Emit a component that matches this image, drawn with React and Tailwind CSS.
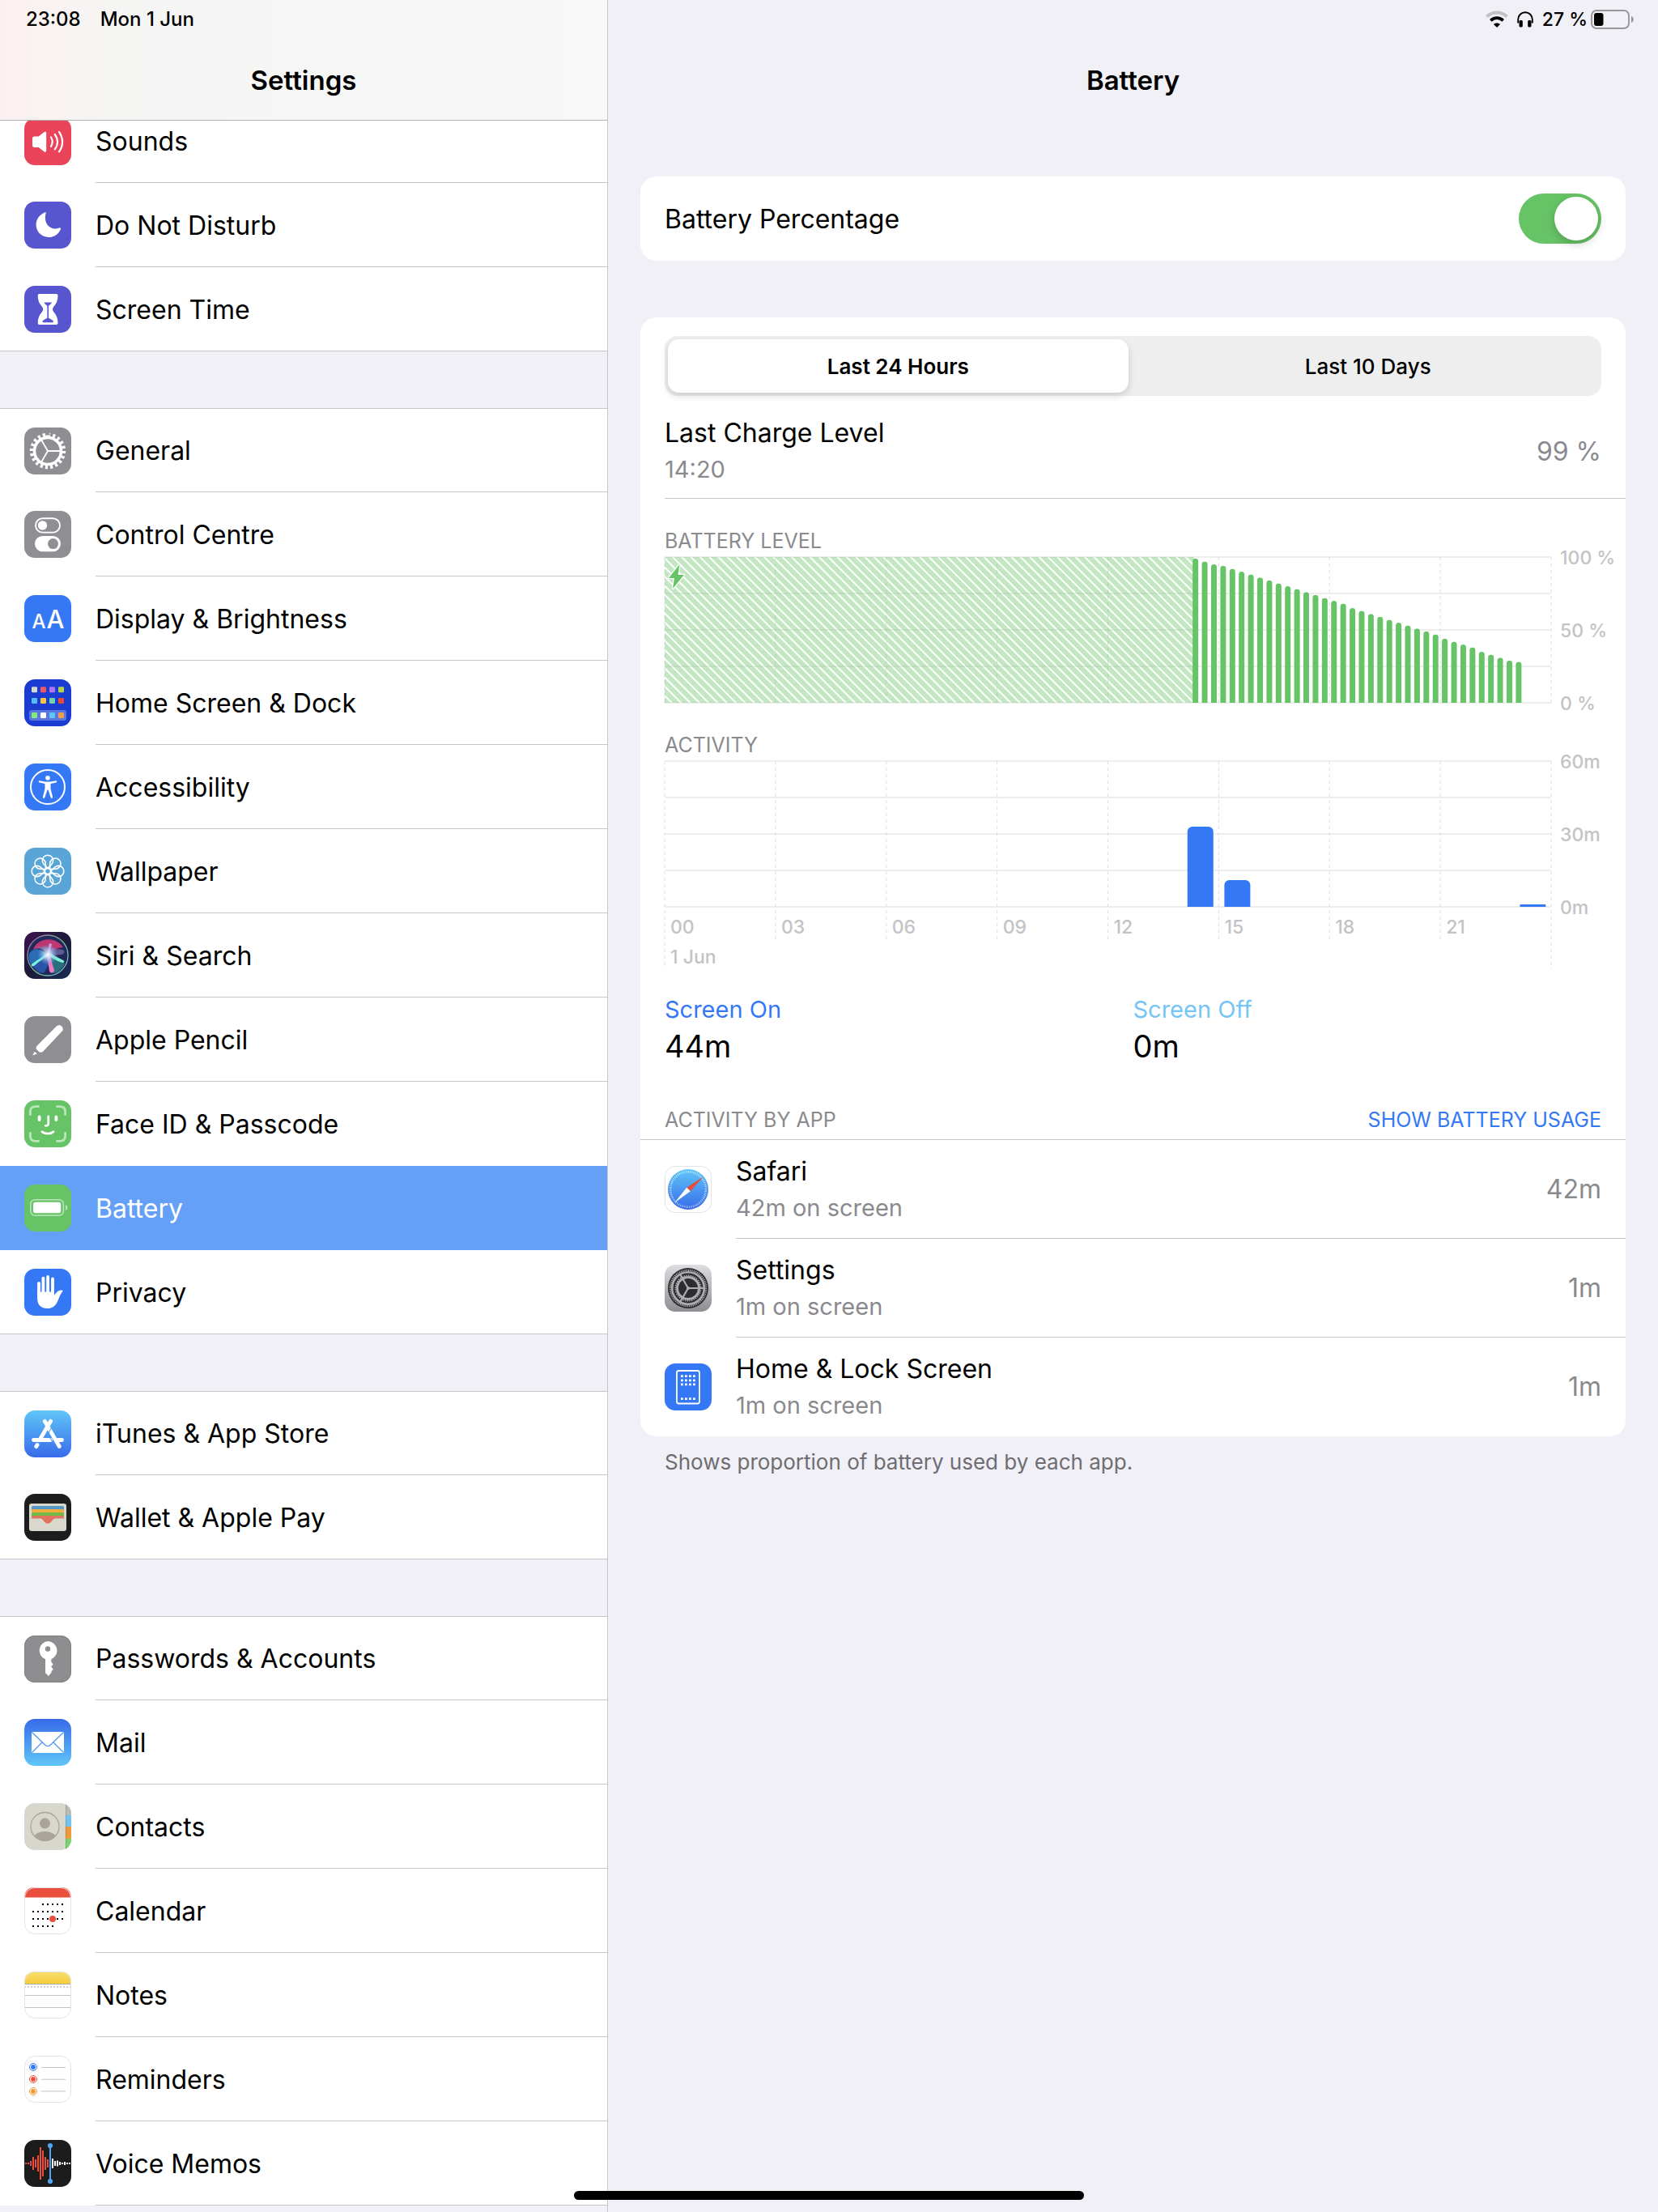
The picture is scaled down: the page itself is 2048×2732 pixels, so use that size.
import { useState } from "react";

const Tile = ({ fill, border, children }) => (
  <svg viewBox="0 0 58 58" className="size-[58px] shrink-0" aria-hidden="true">
    <rect width="58" height="58" rx="13" fill={fill} />
    {children}
    {border && (
      <rect x="0.5" y="0.5" width="57" height="57" rx="12.5" fill="none" stroke="#e3e3e5" />
    )}
  </svg>
);

const SoundsIcon = () => (
  <Tile fill="#ea445a">
    <path
      d="M10 25.2q0-2.7 2.7-2.7h5l6.7-5.3q2.8-1.8 2.8 1.6v20.8q0 3.4-2.8 1.6l-6.7-5.3h-5q-2.7 0-2.7-2.7z"
      fill="#fff"
    />
    <g fill="none" stroke="#fff" strokeWidth="2.2" strokeLinecap="round">
      <path d="M33 23.5c2.2 3.6 2.2 7.8 0 11.4" />
      <path d="M37.8 20c4.2 5.8 4.2 12.6 0 18.4" />
      <path d="M43 17c5.4 7.6 5.4 16.8 0 24.4" />
    </g>
  </Tile>
);

const MoonIcon = () => (
  <Tile fill="#5856ce">
    <path
      d="M25.6 13.2C18.8 16 14.6 22 14.6 28.6c0 8.6 6.8 15.4 15.6 15.4 6.7 0 12.6-4 14.9-10.6.2-.9-.5-1.2-1.5-.8-10.8 3.6-20.4-5-17-18.2.2-1-.2-1.5-1-1.2z"
      fill="#fff"
    />
  </Tile>
);

const HourglassIcon = () => (
  <Tile fill="#5856ce">
    <path
      d="M18.5 10h21.2q1.8 0 1.8 2c0 6-1.8 10-5 13.5q-3 3.5 0 7c3.2 3.5 5 8 5 13.5q0 2-1.8 2H18.5q-1.8 0-1.8-2c0-5.5 1.8-10 5-13.5q3-3.5 0-7c-3.2-3.5-5-7.5-5-13.5q0-2 1.8-2z"
      fill="#fff"
    />
    <path
      d="M24.4 20.5h9.7c-1 1.8-2.3 3-4.1 4.3v15c1.6 1.2 4.6 2 5.8 3.6q.7 1.8-.9 1.8H23.5q-1.6 0-.9-1.8c1.2-1.6 4.2-2.4 5.8-3.6v-15c-1.8-1.3-3-2.5-4-4.3z"
      fill="#5856ce"
    />
  </Tile>
);

const GeneralIcon = () => (
  <Tile fill="#8e8e93">
    <g fill="none" stroke="#fff">
      <circle cx="29" cy="29" r="19.5" strokeWidth="5.4" pathLength="40" strokeDasharray="1 1" />
      <circle cx="29" cy="29" r="16.5" strokeWidth="3.6" />
      <path d="M29 29h16M29 29l-8-13.9M29 29l-8 13.9" strokeWidth="1.9" />
    </g>
  </Tile>
);

const ControlCentreIcon = () => (
  <Tile fill="#8e8e93">
    <rect x="14" y="9.2" width="30" height="17.4" rx="8.7" fill="none" stroke="#fff" strokeWidth="1.9" />
    <circle cx="22.5" cy="17.9" r="5.7" fill="#fff" />
    <rect x="13" y="31" width="32" height="19.3" rx="9.6" fill="#fff" />
    <circle cx="35.5" cy="40.6" r="6.5" fill="#8e8e93" />
  </Tile>
);

const DisplayIcon = () => (
  <Tile fill="#3478f6">
    <g fill="#fff" fontFamily="Inter, sans-serif" fontWeight="500" textAnchor="middle">
      <text x="18" y="41" fontSize="24">A</text>
      <text x="38.5" y="41" fontSize="31">A</text>
    </g>
  </Tile>
);

const dockColors = [
  ["#d9d9d3", "#eb5a63", "#b073f2", "#b7d34c"],
  ["#55bdf8", "#f7c443", "#6fd5a8", "#ea4b37"],
  ["#84ea7d", "#ffffff", "#5cc9fa", "#f19e4c"],
];
const dockRows = [9.3, 23, 41];

const HomeDockIcon = () => (
  <Tile fill="#1b3cd1">
    <rect x="6" y="38" width="46" height="13" rx="3" fill="#5c76df" />
    {dockColors.map((row, r) =>
      row.map((color, c) => (
        <rect key={color} x={9 + c * 11} y={dockRows[r]} width="7" height="7" rx="1.2" fill={color} />
      ))
    )}
  </Tile>
);

const AccessibilityIcon = () => (
  <Tile fill="#3478f6">
    <circle cx="29" cy="29" r="21" fill="none" stroke="#fff" strokeWidth="2" />
    <circle cx="29" cy="17.7" r="2.8" fill="#fff" />
    <path
      d="M19 21.3l7 1.3h6l7-1.3c1.5-.2 1.7 1.8.3 2.1l-6.8 1.5v6l2.6 10.6c.3 1.5-1.8 2-2.4.6L29.5 32.5h-1l-3.2 9.6c-.6 1.4-2.7.9-2.4-.6l2.6-10.6v-6l-6.800-1.5c-1.4-.3-1.2-2.3.3-2.1z"
      fill="#fff"
    />
  </Tile>
);

const WallpaperIcon = () => (
  <Tile fill="#59a5d8">
    <g fill="none" stroke="#fff" strokeWidth="1.6" strokeLinejoin="round">
      {[0, 45, 90, 135, 180, 225, 270, 315].map((angle) => (
        <path
          key={angle}
          d="M29 25.4l-4.9-5.2A6.6 6.6 0 1 1 33.9 20.2z"
          transform={`rotate(${angle} 29 29)`}
        />
      ))}
      <circle cx="29" cy="29" r="3.6" />
    </g>
  </Tile>
);

const SiriIcon = () => (
  <Tile fill="url(#siriBg)">
    <defs>
      <linearGradient id="siriBg" x1="0" y1="0" x2="1" y2="1">
        <stop offset="0" stopColor="#41104f" />
        <stop offset="0.5" stopColor="#1b1b3a" />
        <stop offset="1" stopColor="#1b2c55" />
      </linearGradient>
      <radialGradient id="siriGlow">
        <stop offset="0" stopColor="#fff" />
        <stop offset="0.35" stopColor="#c9e4fa" stopOpacity="0.75" />
        <stop offset="1" stopColor="#6aa5e8" stopOpacity="0" />
      </radialGradient>
      <linearGradient id="siriRing" x1="0" y1="0" x2="1" y2="1">
        <stop offset="0" stopColor="#9a63ad" />
        <stop offset="0.5" stopColor="#78b88f" />
        <stop offset="1" stopColor="#6cb6d8" />
      </linearGradient>
    </defs>
    <circle cx="29" cy="29" r="25" fill="#23285a" stroke="url(#siriRing)" strokeWidth="1.3" />
    <path d="M11 22C15 9 36 3 48 19c-9 1-13 4-17 8-5-6-11-8-20-5z" fill="#d93a78" opacity="0.85" />
    <path d="M14 19c9-3 20 2 33 3 4 1 3 6-2 6l-14 1C27 23 21 20 14 19z" fill="#7a6fae" opacity="0.7" />
    <path d="M6 27c3-6 11-8 17-3l6 4L10 42C6 38 5 32 6 27z" fill="#2c79c4" opacity="0.85" />
    <path d="M10 41c6-7 12-12 20-13l2 9-8 14c-7-1-12-5-14-10z" fill="#2c5fb8" opacity="0.8" />
    <path d="M30 27l20 12c-4 8-10 12-15 12z" fill="#2a7c86" opacity="0.85" />
    <path d="M30 26c-7 4-15 9-21 14-1 2 1 3 3 2 6-5 12-10 19-12zM28 27c6 5 12 9 19 11 3 0 3-2 1-3-6-3-11-6-17-9z" fill="#7df0da" />
    <path d="M31 14l3 1-3 13h-3z" fill="#d7b6ea" opacity="0.8" />
    <path d="M27 28l5-1c1 8 3 14 5 20 0 4-5 5-6 1-1-7-2-13-4-20z" fill="#ee79c5" />
    <circle cx="29" cy="28" r="13" fill="url(#siriGlow)" />
  </Tile>
);

const PencilIcon = () => (
  <Tile fill="#8e8e93">
    <path
      d="M40 12.3c3.8-2.8 9.3.8 7.3 5.6L23.6 43.2c-1.4 1.5-3.2 1.8-5 1.2l-3.6-3.3c-.8-1.6-.4-3 .8-4.5zM12.8 43.8l3 2.7-5.7 2z"
      fill="#fff"
    />
  </Tile>
);

const FaceIdIcon = () => (
  <Tile fill="#67c466">
    <g fill="none" strokeLinecap="round" strokeWidth="2.8">
      <path
        d="M7.4 17.5v-3.3q0-6.6 6.6-6.6h3.5M40.5 7.6H44q6.6 0 6.6 6.6v3.3M50.6 40.5v3.3q0 6.6-6.6 6.6h-3.5M17.5 50.4H14q-6.6 0-6.6-6.6v-3.3"
        stroke="#bce5bb"
      />
      <g stroke="#fff">
        <path d="M18.6 20.5v3.5M39.4 20.5v3.5" strokeWidth="3.8" />
        <path d="M29.8 20v8.5q0 3-3.5 2.9" />
        <path d="M22 38.8c4 3.2 10 3.2 14 0" />
      </g>
    </g>
  </Tile>
);

const BatteryIcon = () => (
  <Tile fill="#67c466">
    <rect x="7.8" y="18.7" width="40.6" height="19.6" rx="5.5" fill="none" stroke="#bce5bb" strokeWidth="1.5" />
    <rect x="11" y="21.7" width="34.2" height="13.6" rx="2.8" fill="#fff" />
    <path d="M51 25.3c3.2.6 3.2 5.8 0 6.6z" fill="#bce5bb" />
  </Tile>
);

const HandIcon = () => (
  <Tile fill="#3478f6">
    <g fill="none" stroke="#fff" strokeWidth="3.8" strokeLinecap="round">
      <path d="M18 18v16M23.4 11.6v20M29.1 10v20M35 12.3v20" />
    </g>
    <path
      d="M16.1 28.5h20.8v4.2l3.2-3.6c1.8-2.2 4-3 6.6-2.5 1 .2 1.1.9.5 1.6-2.6 2.8-3.7 6.2-5.3 10.2C39.3 45 35.5 49 28.6 49c-8.2 0-12.5-4.7-12.5-12.5z"
      fill="#fff"
    />
  </Tile>
);

const AppStoreIcon = () => (
  <Tile fill="url(#storeBg)">
    <defs>
      <linearGradient id="storeBg" x1="0" y1="0" x2="0" y2="1">
        <stop offset="0" stopColor="#5fc6f8" />
        <stop offset="1" stopColor="#386be9" />
      </linearGradient>
    </defs>
    <g fill="none" stroke="#fff" strokeWidth="4.8" strokeLinecap="round">
      <path d="M32.6 13.3L19.5 35.5M16 42.6l-1.3 2" />
      <path d="M25.3 13.3L43.3 44.5" />
      <path d="M11.5 36.5h21M41 36.5h5.5" />
    </g>
    <path d="M33.5 21.5l-4.3 7.6 6.5 11.5" fill="none" stroke="#4b92f0" />
  </Tile>
);

const WalletIcon = () => (
  <Tile fill="#1d1d1d">
    <rect x="6" y="12" width="46" height="34" rx="3" fill="#dad8cd" />
    <path d="M9 20v-3q0-2 2-2h36q2 0 2 2v3z" fill="#5398c6" />
    <path d="M9 24v-3q0-2 2-2h36q2 0 2 2v3z" fill="#f2ae3d" />
    <path d="M9 28v-3q0-2 2-2h36q2 0 2 2v3z" fill="#6fbb46" />
    <path d="M9 31v-2q0-2 2-2h36q2 0 2 2v2H37c-2.5 0-3.5 5.7-8 5.7S23.5 31 21 31z" fill="#e2725f" />
    <path d="M6 30.5h15M37 30.5h15" stroke="#c3c1b5" strokeWidth="0.8" />
  </Tile>
);

const KeyIcon = () => (
  <Tile fill="#8e8e91">
    <rect x="0.5" y="0.5" width="57" height="57" rx="12.5" fill="none" stroke="#808083" />
    <path
      d="M29 7a11.6 11.6 0 0 1 4.3 22.3v3.4l2.5 2.7-2.3 2.3 0 1 2.3 3.1-2.3 2.4v1.5L30 50l-4-3.8V29.3A11.6 11.6 0 0 1 29 7z"
      fill="#fff"
    />
    <circle cx="29" cy="16.5" r="3.2" fill="#8e8e91" />
  </Tile>
);

const MailIcon = () => (
  <Tile fill="url(#mailBg)">
    <defs>
      <linearGradient id="mailBg" x1="0" y1="0" x2="0" y2="1">
        <stop offset="0" stopColor="#386be9" />
        <stop offset="1" stopColor="#5fc6f8" />
      </linearGradient>
    </defs>
    <rect x="9" y="16" width="40" height="26" rx="0.8" fill="#fff" />
    <g fill="none" stroke="#4b93f0" strokeWidth="1.2">
      <path d="M9.5 16.5l15.5 15q4 4.5 8 0l15.5-15" />
      <path d="M9.5 41.5l12.5-12.5M48.5 41.5L36 29" />
    </g>
  </Tile>
);

const ContactsIcon = () => (
  <Tile fill="#d7d7ce">
    <clipPath id="contactsClip">
      <rect width="58" height="58" rx="13" />
    </clipPath>
    <clipPath id="contactsFace">
      <circle cx="25.5" cy="29" r="17.5" />
    </clipPath>
    <g clipPath="url(#contactsClip)">
      <rect x="51" width="7" height="15" fill="#bcbcb3" />
      <rect x="51" y="15" width="7" height="14" fill="#74c2f3" />
      <rect x="51" y="29" width="7" height="15" fill="#f1983a" />
      <rect x="51" y="44" width="7" height="14" fill="#78d46f" />
      <rect x="51" width="1" height="58" fill="#000" opacity="0.15" />
    </g>
    <circle cx="25.5" cy="29" r="17.5" fill="none" stroke="#a9a39c" strokeWidth="1.3" />
    <g fill="#a9a39c" clipPath="url(#contactsFace)">
      <circle cx="25.5" cy="25" r="6.5" />
      <ellipse cx="25.5" cy="45" rx="15" ry="10" />
    </g>
  </Tile>
);

const calendarRows = [
  [2, 6],
  [0, 6],
  [0, 6],
  [0, 4],
];

const CalendarIcon = () => (
  <Tile fill="#fff" border>
    <path d="M0 12.5C.3 4.5 5 0 13 0h32c8 0 12.7 4.5 13 12.5z" fill="#ea4f3d" />
    {calendarRows.map(([from, to], r) =>
      Array.from({ length: to - from + 1 }, (_, i) => (
        <rect key={`${r}-${i}`} x={10 + (from + i) * 6} y={20 + r * 9} width="2" height="2" />
      ))
    )}
    <circle cx="35" cy="39" r="4" fill="#ea4f3d" />
  </Tile>
);

const NotesIcon = () => (
  <Tile fill="#fff" border>
    <defs>
      <linearGradient id="notesTop" x1="0" y1="0" x2="0" y2="1">
        <stop offset="0" stopColor="#f9de70" />
        <stop offset="1" stopColor="#f5cc3c" />
      </linearGradient>
    </defs>
    <path d="M0 15v-2C0 5 5 0 13 0h32c8 0 13 5 13 13v2z" fill="url(#notesTop)" />
    <path d="M0 15.5h58" stroke="#a9a9a4" strokeWidth="1.2" />
    <path d="M0 19h58" stroke="#cfcfcf" strokeWidth="2" strokeDasharray="2 2" />
    <path d="M0 29.5h58M0 44.5h58" stroke="#c4c4c6" />
  </Tile>
);

const RemindersIcon = () => (
  <Tile fill="#fff" border>
    {["#3478f6", "#ea4f3d", "#f19a37"].map((color, i) => (
      <g key={color} stroke={color}>
        <circle cx="11" cy={14 + i * 15} r="4.5" fill="none" />
        <circle cx="11" cy={14 + i * 15} r="2.9" fill={color} stroke="none" />
        <path d={`M21 ${14.5 + i * 14.7}h30`} stroke="#c4c4c6" />
      </g>
    ))}
  </Tile>
);

const redBars = [2, 2, 6, 16, 10, 20, 40, 32, 16, 10];
const whiteBars = [12, 6, 7, 4, 2, 4, 2, 2];

const VoiceMemosIcon = () => (
  <Tile fill="#1c1c1c">
    {redBars.map((h, i) => (
      <rect key={i} x={1 + i * 3} y={29 - h / 2} width="2" height={h} fill="#ea4f3d" />
    ))}
    {whiteBars.map((h, i) => (
      <rect key={i} x={34 + i * 3} y={29 - h / 2} width="2" height={h} fill="#fff" />
    ))}
    <path d="M32 7v44" stroke="#4fa6f2" strokeWidth="2" />
    <circle cx="32" cy="7" r="3.1" fill="#4fa6f2" />
    <circle cx="32" cy="51" r="3.1" fill="#4fa6f2" />
  </Tile>
);

const SafariIcon = () => (
  <Tile fill="#fff" border>
    <circle cx="29" cy="29" r="25" fill="url(#storeBg)" />
    <circle
      cx="29"
      cy="29"
      r="21.8"
      fill="none"
      stroke="#fff"
      strokeOpacity="0.75"
      strokeWidth="2.6"
      pathLength="120"
      strokeDasharray="0.7 1.3"
    />
    <path d="M47.5 13.5L31.8 31.2l-4.6-4.4z" fill="#ea4b3a" />
    <path d="M12.2 45.500l19.600-14.300-4.600-4.400z" fill="#fff" />
  </Tile>
);

const SettingsIcon = () => (
  <Tile fill="url(#gearBg)">
    <defs>
      <linearGradient id="gearBg" x1="0" y1="0" x2="0" y2="1">
        <stop offset="0" stopColor="#dedee2" />
        <stop offset="1" stopColor="#8d8d92" />
      </linearGradient>
    </defs>
    <circle cx="29" cy="29" r="25" fill="#2d2d2f" />
    <g fill="none" stroke="#adadb0">
      <circle cx="29" cy="29" r="22.2" strokeWidth="2.2" pathLength="120" strokeDasharray="1 1" />
      <circle cx="29" cy="29" r="19.8" strokeWidth="2.6" />
      <circle cx="29" cy="29" r="13.5" strokeWidth="3" />
      <circle cx="29" cy="29" r="15.6" strokeWidth="1.8" pathLength="72" strokeDasharray="1 1" />
      <path d="M29 29h20M29 29L19 11.7M29 29L19 46.3" strokeWidth="2.2" />
    </g>
    <circle cx="29" cy="29" r="2" fill="#adadb0" />
  </Tile>
);

const HomeLockIcon = () => (
  <Tile fill="#3478f6">
    <rect x="15" y="9" width="28" height="40.5" rx="2.5" fill="none" stroke="#fff" strokeWidth="1.8" />
    {[14.2, 19.4, 24.4, 42.2].map((y) =>
      [20, 25, 30, 35].map((x) => (
        <rect key={`${x}-${y}`} x={x} y={y} width="2.8" height="2.8" rx="0.5" fill="#fff" />
      ))
    )}
  </Tile>
);

const groups = [
  [
    { name: "Sounds", icon: SoundsIcon },
    { name: "Do Not Disturb", icon: MoonIcon },
    { name: "Screen Time", icon: HourglassIcon },
  ],
  [
    { name: "General", icon: GeneralIcon },
    { name: "Control Centre", icon: ControlCentreIcon },
    { name: "Display & Brightness", icon: DisplayIcon },
    { name: "Home Screen & Dock", icon: HomeDockIcon },
    { name: "Accessibility", icon: AccessibilityIcon },
    { name: "Wallpaper", icon: WallpaperIcon },
    { name: "Siri & Search", icon: SiriIcon },
    { name: "Apple Pencil", icon: PencilIcon },
    { name: "Face ID & Passcode", icon: FaceIdIcon },
    { name: "Battery", icon: BatteryIcon },
    { name: "Privacy", icon: HandIcon },
  ],
  [
    { name: "iTunes & App Store", icon: AppStoreIcon },
    { name: "Wallet & Apple Pay", icon: WalletIcon },
  ],
  [
    { name: "Passwords & Accounts", icon: KeyIcon },
    { name: "Mail", icon: MailIcon },
    { name: "Contacts", icon: ContactsIcon },
    { name: "Calendar", icon: CalendarIcon },
    { name: "Notes", icon: NotesIcon },
    { name: "Reminders", icon: RemindersIcon },
    { name: "Voice Memos", icon: VoiceMemosIcon },
  ],
];

const apps = [
  { name: "Safari", detail: "42m on screen", time: "42m", icon: SafariIcon },
  { name: "Settings", detail: "1m on screen", time: "1m", icon: SettingsIcon },
  { name: "Home & Lock Screen", detail: "1m on screen", time: "1m", icon: HomeLockIcon },
];

// battery percentage for each quarter of an hour, starting at 14:15
const levels = [
  99, 97, 95, 94, 92, 90, 88, 86, 84, 82, 80, 78, 76, 74, 72, 70, 68, 65, 63, 61,
  59, 57, 55, 53, 51, 49, 47, 44, 42, 40, 38, 35, 33, 31, 29, 28,
];
const activity = [
  { hour: 14, minutes: 33 },
  { hour: 15, minutes: 11 },
  { hour: 23, minutes: 1 },
];
const hours = ["00", "03", "06", "09", "12", "15", "18", "21"];
const percent = (value) => `${value * 100}%`;

const Sidebar = () => {
  const [selected, setSelected] = useState("Battery");
  return (
    <aside className="flex w-[751px] shrink-0 flex-col border-r border-[#c8c8cc]">
      <header className="relative z-10 h-[149px] shrink-0 border-b border-[#b2b2b4] bg-linear-to-r from-[#fcf1f0] via-[#f5f5f4] via-18% to-[#f8f8f8]">
        <div className="flex h-12 items-center gap-6 pl-8 text-[24px] font-medium">
          <span>23:08</span>
          <span>Mon 1 Jun</span>
        </div>
        <h1 className="text-center text-[33px] leading-[102px] font-semibold">Settings</h1>
      </header>
      {/* list is scrolled a little way under the header */}
      <nav className="-mt-[27px] flex flex-col gap-[70px]">
        {groups.map((items, g) => (
          <ul key={g} className="bg-white">
            {items.map(({ name, icon: Icon }, i) => {
              const active = name === selected;
              const closesGroup = i === items.length - 1 && g < groups.length - 1;
              return (
                <li key={name} className={i === 0 ? "border-t border-[#c6c6c8]" : ""}>
                  <a
                    href="#"
                    onClick={() => setSelected(name)}
                    className={`flex items-center gap-[30px] pl-[30px] ${i === 0 ? "h-[103px]" : "h-[104px]"} ${
                      active ? "bg-[#64a0f7] text-white" : ""
                    } ${closesGroup ? "border-b border-[#c6c6c8]" : ""}`}
                  >
                    <Icon />
                    <span
                      className={`flex h-full flex-1 items-center pt-0.5 ${
                        active || closesGroup || items[i + 1]?.name === selected
                          ? ""
                          : "border-b border-[#c6c6c8]"
                      }`}
                    >
                      {name}
                    </span>
                  </a>
                </li>
              );
            })}
          </ul>
        ))}
      </nav>
    </aside>
  );
};

const BatteryLevelChart = () => (
  <svg className="h-[180px] w-full overflow-visible" role="img" aria-label="Battery level">
    <defs>
      <pattern id="hatch" width="8" height="8" patternUnits="userSpaceOnUse" patternTransform="rotate(-45)">
        <rect width="6" height="8" fill="#67c466" fillOpacity="0.4" />
      </pattern>
    </defs>
    {[0, 1, 2, 3, 4].map((i) => (
      <line key={i} x1="0" x2="100%" y1={i * 45} y2={i * 45} stroke="#eeeeef" strokeWidth="2" />
    ))}
    {[0, 1, 2, 3, 4, 5, 6, 7, 8].map((i) => (
      <line key={i} x1={percent(i / 8)} x2={percent(i / 8)} y1="0" y2="180" stroke="#dedee0" strokeDasharray="4 4" />
    ))}
    <rect width="59.7%" height="180" fill="url(#hatch)" />
    {levels.map((level, i) => (
      <svg key={i} x={percent((57 + i) / 96)} y={180 - level * 1.8} width="12" height={level * 1.8}>
        <path d="M2 200V3.5a3.5 3.5 0 0 1 7 0V200z" fill="#67c466" />
      </svg>
    ))}
    <path
      d="M18.5 9L5 26h7l-2 13L24 22h-7.5z"
      fill="#67c466"
      stroke="#fff"
      strokeWidth="2.5"
      strokeLinejoin="round"
      paintOrder="stroke"
    />
    <g fill="#c3c3c5" fontSize="23" fontWeight="500">
      <text x="100%" y="9" dx="11">100 %</text>
      <text x="100%" y="99" dx="11">50 %</text>
      <text x="100%" y="189" dx="11">0 %</text>
    </g>
  </svg>
);

const ActivityChart = () => (
  <svg className="h-[257px] w-full overflow-visible" role="img" aria-label="Activity">
    {[0, 1, 2, 3, 4].map((i) => (
      <line key={i} x1="0" x2="100%" y1={i * 45} y2={i * 45} stroke="#eeeeef" strokeWidth="2" />
    ))}
    {[0, 1, 2, 3, 4, 5, 6, 7, 8].map((i) => (
      <line
        key={i}
        x1={percent(i / 8)}
        x2={percent(i / 8)}
        y1="0"
        y2={i % 8 === 0 ? 257 : 224}
        stroke="#dedee0"
        strokeDasharray="4 4"
      />
    ))}
    {activity.map(({ hour, minutes }) => (
      <svg key={hour} x={percent(hour / 24)} y={180 - minutes * 3} width="42" height={minutes * 3}>
        <rect x="7" width="32" height={minutes * 3 + 10} rx={minutes > 3 ? 6 : 1} fill="#3478f6" />
      </svg>
    ))}
    <g fill="#c3c3c5" fontSize="23" fontWeight="500">
      <text x="100%" y="9" dx="11">60m</text>
      <text x="100%" y="99" dx="11">30m</text>
      <text x="100%" y="189" dx="11">0m</text>
      {hours.map((hour, i) => (
        <text key={hour} x={percent(i / 8)} y="213" dx="7">{hour}</text>
      ))}
      <text x="7" y="250">1 Jun</text>
    </g>
  </svg>
);

const StatusIcons = () => (
  <div className="flex h-12 items-center justify-end pr-[29px]">
    <svg viewBox="0 0 28 22" className="mr-[11px] h-[22px] w-7" aria-label="Wi-Fi">
      <path d="M1.5 7.5C8.5.8 19.5.8 26.5 7.5" fill="none" stroke="#c0c0c5" strokeWidth="4" />
      <path d="M6.3 12.3c4.5-4.2 10.9-4.2 15.4 0" fill="none" stroke="#000" strokeWidth="3.8" />
      <path d="M14 21l-4-4c2.2-2 5.8-2 8 0z" />
    </svg>
    <svg viewBox="0 0 20 20" className="mr-[11px] size-5" aria-label="Headphones">
      <path d="M1.2 14.5V10a8.8 8.8 0 0 1 17.6 0v4.5" fill="none" stroke="#000" strokeWidth="1.9" />
      <rect x="2.5" y="11" width="4.3" height="8.5" rx="1.5" />
      <rect x="13.2" y="11" width="4.3" height="8.5" rx="1.5" />
    </svg>
    <span className="text-[23px] font-medium">27 %</span>
    <svg viewBox="0 0 54 24" className="ml-1 h-6 w-[54px]" aria-label="Battery at 27 percent">
      <rect x="1" y="1" width="46" height="22" rx="6" fill="none" stroke="#95959a" strokeWidth="1.9" />
      <rect x="4" y="4" width="11.5" height="16" rx="3" />
      <path d="M50 8c3.6 1 3.6 7 0 8z" fill="#95959a" />
    </svg>
  </div>
);

const BatteryPanel = () => {
  const [showPercentage, setShowPercentage] = useState(true);
  const [range, setRange] = useState("Last 24 Hours");
  return (
    <main className="flex min-w-0 flex-1 flex-col">
      <header className="h-[148px]">
        <StatusIcons />
        <h2 className="text-center text-[33px] leading-[102px] font-semibold">Battery</h2>
      </header>

      <div className="mt-[70px] px-10">
        <label className="flex h-[104px] items-center justify-between rounded-[20px] bg-white px-[30px]">
          <span className="pt-0.5">Battery Percentage</span>
          <input
            type="checkbox"
            role="switch"
            checked={showPercentage}
            onChange={(e) => setShowPercentage(e.target.checked)}
            className="h-[62px] w-[102px] appearance-none rounded-full bg-[#e9e9ea] p-1 before:block before:size-[54px] before:rounded-full before:bg-white before:shadow-[0_4px_12px_rgba(0,0,0,0.2)] checked:bg-[#67c466] checked:before:ml-10"
          />
        </label>

        <section className="mt-[70px] overflow-hidden rounded-[20px] bg-white pt-[23px]">
          <div className="mx-[30px] grid h-[74px] grid-cols-2 gap-3 rounded-2xl bg-[#eeeeee] p-1 text-[26px]">
            {["Last 24 Hours", "Last 10 Days"].map((label) => (
              <button
                key={label}
                type="button"
                aria-pressed={range === label}
                onClick={() => setRange(label)}
                className={
                  range === label
                    ? "rounded-[14px] bg-white font-semibold shadow-[0_4px_10px_rgba(0,0,0,0.15)]"
                    : "font-medium"
                }
              >
                {label}
              </button>
            ))}
          </div>

          <div className="ml-[30px] flex h-[127px] items-center justify-between border-b border-[#c6c6c8] pt-3 pr-[30px]">
            <div>
              <p className="leading-[44px]">Last Charge Level</p>
              <p className="text-[29px] leading-[46px] text-[#8a8a8e]">14:20</p>
            </div>
            <span className="text-[#8a8a8e]">99 %</span>
          </div>

          <div className="pr-[92px] pl-[30px]">
            <h3 className="pt-[34px] pb-0.5 text-[25px] leading-9 text-[#8a8a8e]">BATTERY LEVEL</h3>
            <BatteryLevelChart />
            <h3 className="pt-[34px] pb-0.5 text-[25px] leading-9 text-[#8a8a8e]">ACTIVITY</h3>
            <ActivityChart />
          </div>

          <dl className="mt-7 grid grid-cols-2 px-[30px]">
            <div>
              <dt className="text-[29px] leading-[44px] text-[#3478f6]">Screen On</dt>
              <dd className="text-[38px] leading-[46px]">44m</dd>
            </div>
            <div>
              <dt className="text-[29px] leading-[44px] text-[#74c5f5]">Screen Off</dt>
              <dd className="text-[38px] leading-[46px]">0m</dd>
            </div>
          </dl>

          <div className="mt-[50px] flex h-[43px] items-start justify-between border-b border-[#c6c6c8] px-[30px] text-[25px] leading-9">
            <h3 className="text-[#8a8a8e]">ACTIVITY BY APP</h3>
            <button type="button" className="text-[#3478f6]">SHOW BATTERY USAGE</button>
          </div>
          <ul>
            {apps.map(({ name, detail, time, icon: Icon }) => (
              <li key={name} className="group flex h-[122px] items-center gap-[30px] pl-[30px]">
                <Icon />
                <div className="flex h-full flex-1 items-center justify-between border-b border-[#c6c6c8] pr-[30px] group-last:border-b-0">
                  <div>
                    <p className="leading-[46px]">{name}</p>
                    <p className="text-[29px] leading-[44px] text-[#8a8a8e]">{detail}</p>
                  </div>
                  <span className="text-[#8a8a8e]">{time}</span>
                </div>
              </li>
            ))}
          </ul>
        </section>
        <p className="mt-3 px-[30px] text-[26px] leading-10 text-[#6d6d72]">
          Shows proportion of battery used by each app.
        </p>
      </div>
    </main>
  );
};

export default function App() {
  return (
    <div className="relative flex h-screen overflow-hidden bg-[#f1f0f6] font-['Inter',sans-serif] text-[32px] text-black">
      <Sidebar />
      <BatteryPanel />
      <div className="absolute bottom-[15px] left-1/2 z-20 h-[11px] w-[630px] -translate-x-1/2 rounded-full bg-black" />
    </div>
  );
}
